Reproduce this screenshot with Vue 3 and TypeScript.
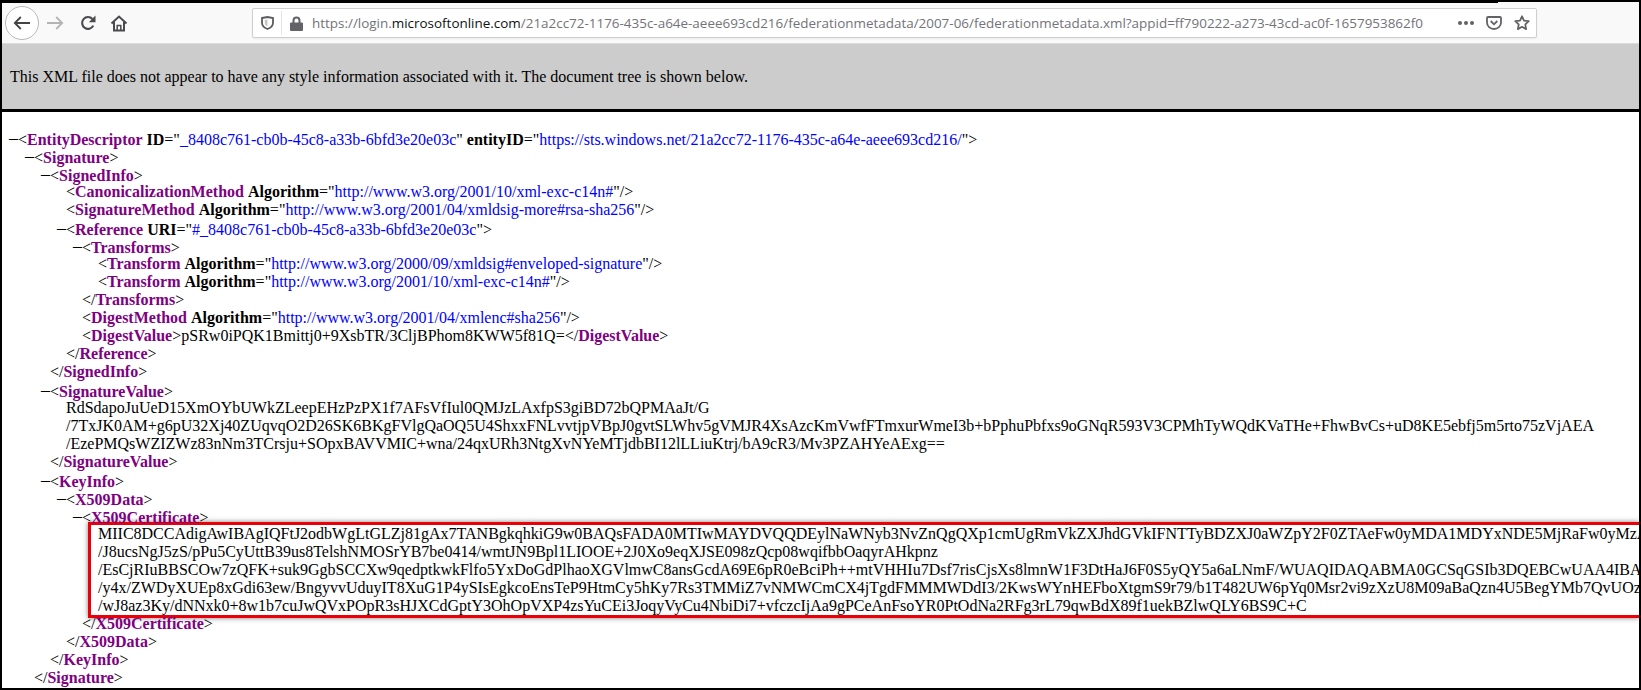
<script setup lang="ts">
type Kind = 'p' | 'n' | 'a' | 'v' | 't'
type Seg = [Kind, string]
interface Line { indent: number; dash?: boolean; segs: Seg[] }

const open = (name: string, attrs: [string, string][] = [], end = '>'): Seg[] => {
  const out: Seg[] = [['p', '<'], ['n', name]]
  attrs.forEach(([k, v]) => {
    out.push(['t', ' '], ['a', k], ['p', '="'], ['v', v], ['p', '"'])
  })
  out.push(['p', end])
  return out
}
const close = (name: string): Seg[] => [['p', '</'], ['n', name], ['p', '>']]
const text = (s: string): Seg[] => [['t', s]]

const before: Line[] = [
  { indent: 0, dash: true, segs: open('EntityDescriptor', [['ID', '_8408c761-cb0b-45c8-a33b-6bfd3e20e03c'], ['entityID', 'https://sts.windows.net/21a2cc72-1176-435c-a64e-aeee693cd216/']]) },
  { indent: 1, dash: true, segs: open('Signature') },
  { indent: 2, dash: true, segs: open('SignedInfo') },
  { indent: 3, segs: open('CanonicalizationMethod', [['Algorithm', 'http://www.w3.org/2001/10/xml-exc-c14n#']], '/>') },
  { indent: 3, segs: open('SignatureMethod', [['Algorithm', 'http://www.w3.org/2001/04/xmldsig-more#rsa-sha256']], '/>') },
  { indent: 3, dash: true, segs: open('Reference', [['URI', '#_8408c761-cb0b-45c8-a33b-6bfd3e20e03c']]) },
  { indent: 4, dash: true, segs: open('Transforms') },
  { indent: 5, segs: open('Transform', [['Algorithm', 'http://www.w3.org/2000/09/xmldsig#enveloped-signature']], '/>') },
  { indent: 5, segs: open('Transform', [['Algorithm', 'http://www.w3.org/2001/10/xml-exc-c14n#']], '/>') },
  { indent: 4, segs: close('Transforms') },
  { indent: 4, segs: open('DigestMethod', [['Algorithm', 'http://www.w3.org/2001/04/xmlenc#sha256']], '/>') },
  { indent: 4, segs: [...open('DigestValue'), ['t', 'pSRw0iPQK1Bmittj0+9XsbTR/3CljBPhom8KWW5f81Q='], ...close('DigestValue')] },
  { indent: 3, segs: close('Reference') },
  { indent: 2, segs: close('SignedInfo') },
  { indent: 2, dash: true, segs: open('SignatureValue') },
  { indent: 3, segs: text('RdSdapoJuUeD15XmOYbUWkZLeepEHzPzPX1f7AFsVfIul0QMJzLAxfpS3giBD72bQPMAaJt/G') },
  { indent: 3, segs: text('/7TxJK0AM+g6pU32Xj40ZUqvqO2D26SK6BKgFVlgQaOQ5U4ShxxFNLvvtjpVBpJ0gvtSLWhv5gVMJR4XsAzcKmVwfFTmxurWmeI3b+bPphuPbfxs9oGNqR593V3CPMhTyWQdKVaTHe+FhwBvCs+uD8KE5ebfj5m5rto75zVjAEA') },
  { indent: 3, segs: text('/EzePMQsWZIZWz83nNm3TCrsju+SOpxBAVVMIC+wna/24qxURh3NtgXvNYeMTjdbBI12lLLiuKtrj/bA9cR3/Mv3PZAHYeAExg==') },
  { indent: 2, segs: close('SignatureValue') },
  { indent: 2, dash: true, segs: open('KeyInfo') },
  { indent: 3, dash: true, segs: open('X509Data') },
  { indent: 4, dash: true, segs: open('X509Certificate') },
]

const cert: string[] = [
  'MIIC8DCCAdigAwIBAgIQFtJ2odbWgLtGLZj81gAx7TANBgkqhkiG9w0BAQsFADA0MTIwMAYDVQQDEylNaWNyb3NvZnQgQXp1cmUgRmVkZXJhdGVkIFNTTyBDZXJ0aWZpY2F0ZTAeFw0yMDA1MDYxNDE5MjRaFw0yMzA',
  '/J8ucsNgJ5zS/pPu5CyUttB39us8TelshNMOSrYB7be0414/wmtJN9Bpl1LIOOE+2J0Xo9eqXJSE098zQcp08wqifbbOaqyrAHkpnz',
  '/EsCjRIuBBSCOw7zQFK+suk9GgbSCCXw9qedptkwkFlfo5YxDoGdPlhaoXGVlmwC8ansGcdA69E6pR0eBciPh++mtVHHIu7Dsf7risCjsXs8lmnW1F3DtHaJ6F0S5yQY5a6aLNmF/WUAQIDAQABMA0GCSqGSIb3DQEBCwUAA4IBA',
  '/y4x/ZWDyXUEp8xGdi63ew/BngyvvUduyIT8XuG1P4ySIsEgkcoEnsTeP9HtmCy5hKy7Rs3TMMiZ7vNMWCmCX4jTgdFMMMWDdI3/2KwsWYnHEFboXtgmS9r79/b1T482UW6pYq0Msr2vi9zXzU8M09aBaQzn4U5BegYMb7QvUOz',
  '/wJ8az3Ky/dNNxk0+8w1b7cuJwQVxPOpR3sHJXCdGptY3OhOpVXP4zsYuCEi3JoqyVyCu4NbiDi7+vfczcIjAa9gPCeAnFsoYR0PtOdNa2RFg3rL79qwBdX89f1uekBZlwQLY6BS9C+C',
]

const after: Line[] = [
  { indent: 4, segs: close('X509Certificate') },
  { indent: 3, segs: close('X509Data') },
  { indent: 2, segs: close('KeyInfo') },
  { indent: 1, segs: close('Signature') },
]

const pad = (n: number) => ({ paddingLeft: `${n * 16 + 16}px` })
</script>

<template>
  <div class="frame">
    <header class="toolbar">
      <div class="nav">
        <button class="back" aria-label="Back">
          <svg width="18" height="18" viewBox="0 0 18 18" fill="none" stroke="#444447" stroke-width="1.8">
            <path d="M17 9H1.800M7.800 3 1.800 9l6 6" />
          </svg>
        </button>
        <svg class="fwd" width="18" height="18" viewBox="0 0 18 18" fill="none" stroke="#b4b4b6" stroke-width="1.800">
          <path d="M1 9h15.200M10.200 3l6 6-6 6" />
        </svg>
        <svg class="reload" width="16" height="16" viewBox="0 0 16 16" fill="none" stroke="#4a4a4f" stroke-width="2.100">
          <path d="M13.300 10.600A5.900 5.900 0 1 1 12.400 4" />
          <path d="M15.500 .5v6.700H8.800z" fill="#4a4a4f" stroke="none" />
        </svg>
        <svg class="home" width="18" height="18" viewBox="0 0 18 18" fill="none" stroke="#4a4a4f" stroke-width="2">
          <path d="M1.500 9.500 9 2.500l7.500 7" />
          <path d="M4 8v8.500h10V8" />
          <path d="M7.200 16v-4.600h3.600V16" stroke-width="1.500" />
        </svg>
      </div>
      <div class="urlbar">
        <svg class="shield" width="13" height="14" viewBox="0 0 13 14" fill="none" stroke="#5b5b5f" stroke-width="1.800">
          <path d="M1 2 6.500 1 12 2v4.800c0 3.200-2.500 5.200-5.500 6.200C3.500 12 1 10 1 6.800z" />
          <path d="M6.500 3.400v7.200C5 10 3.800 8.600 3.800 6.800V3.900z" fill="#5b5b5f" stroke="none" opacity=".35" />
        </svg>
        <span class="sep"></span>
        <svg class="lock" width="13" height="15" viewBox="0 0 13 15">
          <path d="M2.500 6.500V4.500a4 4 0 0 1 8 0v2H12a1 1 0 0 1 1 1v6.500a1 1 0 0 1-1 1H1a1 1 0 0 1-1-1V7.500a1 1 0 0 1 1-1zm2 0h4v-2a2 2 0 0 0-4 0z" fill="#636367" fill-rule="evenodd" />
        </svg>
        <div class="url"><span>https://login.</span><b>microsoftonline.com</b><span>/21a2cc72-1176-435c-a64e-aeee693cd216/federationmetadata/2007-06/federationmetadata.xml?appid=ff790222-a273-43cd-ac0f-1657953862f0</span></div>
        <div class="actions">
          <svg width="16" height="4" viewBox="0 0 16 4" fill="#636367">
            <circle cx="2" cy="2" r="2" /><circle cx="8" cy="2" r="2" /><circle cx="14" cy="2" r="2" />
          </svg>
          <svg width="16" height="14" viewBox="0 0 16 14" fill="none" stroke="#636367" stroke-width="1.800">
            <path d="M2 1h12a1 1 0 0 1 1 1v4.500a7 6.500 0 0 1-14 0V2a1 1 0 0 1 1-1z" />
            <path d="M4.700 5 8 8.300 11.300 5" />
          </svg>
          <svg width="16" height="16" viewBox="0 0 16 16" fill="none" stroke="#636367" stroke-width="1.800" stroke-linejoin="round">
            <path d="M8 1.300l2 4.300 4.700.6-3.400 3.200.8 4.700L8 11.800l-4.100 2.300.8-4.700L1.300 6.200 6 5.600z" />
          </svg>
        </div>
      </div>
    </header>

    <div class="notice">This XML file does not appear to have any style information associated with it. The document tree is shown below.</div>

    <main class="tree">
      <div v-for="(line, i) in before" :key="'b' + i" class="line" :style="pad(line.indent)">
        <span v-if="line.dash" class="dash">–</span><span v-for="(seg, j) in line.segs" :key="j" :class="seg[0]">{{ seg[1] }}</span>
      </div>
      <div class="cert">
        <div v-for="(row, i) in cert" :key="i" class="line">{{ row }}</div>
      </div>
      <div v-for="(line, i) in after" :key="'a' + i" class="line" :style="pad(line.indent)">
        <span v-for="(seg, j) in line.segs" :key="j" :class="seg[0]">{{ seg[1] }}</span>
      </div>
    </main>
  </div>
</template>

<style>
html, body { margin: 0; padding: 0; background: #fff; }
</style>

<style scoped>
.frame {
  position: relative;
  box-sizing: border-box;
  width: 1641px;
  height: 690px;
  overflow: hidden;
  display: flex;
  flex-direction: column;
  background: #fff;
  border: 2px solid #000;
  font-family: "Liberation Serif", "Times New Roman", serif;
  font-size: 16px;
  color: #000;
}
.frame::before {
  content: "";
  position: absolute;
  left: 0;
  top: 0;
  width: 1496px;
  height: 1px;
  background: #000;
  z-index: 2;
}
.toolbar {
  box-sizing: border-box;
  flex: none;
  height: 42px;
  padding-top: 6px;
  display: flex;
  align-items: flex-start;
  background: #f9f9fa;
  border-bottom: 1px solid #dcdcdc;
}
.nav {
  flex: none;
  width: 250px;
  height: 30px;
  display: flex;
  align-items: center;
  padding-left: 3px;
  box-sizing: border-box;
}
.back {
  box-sizing: border-box;
  width: 34px;
  height: 34px;
  margin: 0;
  padding: 0;
  flex: none;
  display: flex;
  align-items: center;
  justify-content: center;
  background: #fff;
  border: 1px solid #b9b9bb;
  border-radius: 50%;
}
.fwd { margin-left: 7px; flex: none; }
.reload { margin-left: 16px; flex: none; }
.home { margin-left: 14px; flex: none; }
.urlbar {
  box-sizing: border-box;
  flex: none;
  width: 1285px;
  height: 30px;
  display: flex;
  align-items: center;
  background: #fff;
  border: 1px solid #cfcfd1;
  border-radius: 2px;
  box-shadow: 0 1px 2px rgba(0, 0, 0, 0.06);
}
.shield { margin-left: 8px; flex: none; }
.sep { width: 1px; height: 24px; background: #e4e4e6; margin-left: 7px; flex: none; }
.lock { margin-left: 8px; flex: none; }
.url {
  flex: 1;
  min-width: 0;
  margin-left: 9px;
  white-space: nowrap;
  overflow: hidden;
  font-family: "Open Sans", "Noto Sans", sans-serif;
  font-size: 13.440px;
  color: #737378;
}
.url b { font-weight: 400; color: #111; }
.actions {
  flex: none;
  display: flex;
  align-items: center;
  gap: 12px;
  padding-right: 6px;
}
.notice {
  box-sizing: border-box;
  flex: none;
  height: 68px;
  padding: 0 0 0 8px;
  display: flex;
  align-items: center;
  background: #ccc;
  border-bottom: 3px solid #000;
}
.tree {
  flex: 1;
  min-height: 0;
  box-sizing: border-box;
  padding-top: 17px;
  overflow: hidden;
}
.line {
  height: 18px;
  line-height: 18px;
  white-space: pre;
}
.dash {
  display: inline-block;
  width: 9px;
  margin-left: -9px;
  font-size: 18px;
  vertical-align: 1px;
  color: #000;
}
.p { color: #000; }
.n { color: #800080; font-weight: bold; }
.a { color: #000; font-weight: bold; }
.v { color: #00f; }
.cert {
  margin: -3px 0 -3px 86px;
  padding-left: 7px;
  border: 3px solid #ec0008;
  border-right: 0;
  box-shadow: 0 0 5px rgba(0, 0, 0, 0.5);
}
</style>
